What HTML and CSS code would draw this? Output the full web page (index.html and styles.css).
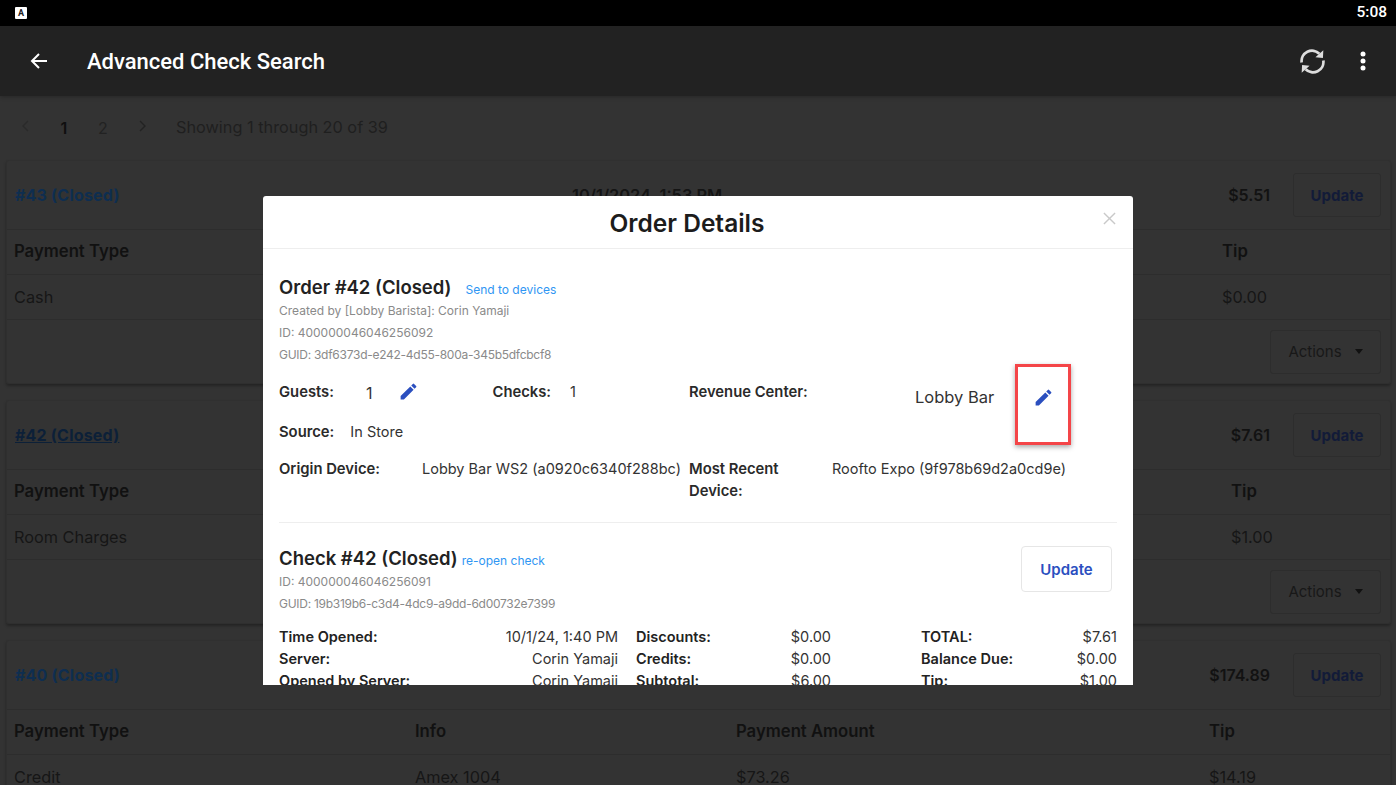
FILE: index.html
```html
<!DOCTYPE html>
<html lang="en">
<head>
<meta charset="utf-8">
<title>Advanced Check Search</title>
<link rel="stylesheet" href="styles.css">
</head>
<body>
<div class="status-bar">
  <span class="status-app">A</span>
  <span class="status-time">5:08</span>
</div>
<header class="app-bar">
  <svg class="back-icon" viewBox="0 0 24 24"><path d="M20 12H5M12 5l-7 7 7 7"/></svg>
  <h1 class="app-title">Advanced Check Search</h1>
  <svg class="sync-icon" viewBox="0 0 24 24"><path class="sync-arc" d="M1.6 13A10 10 0 0 1 18.6 4.6M22.4 11A10 10 0 0 1 5.4 19.4"/><path class="sync-head" d="M22.4 1.2 22 8.6 14.8 8ZM1.6 22.8 2 15.4 9.2 16Z"/></svg>
  <svg class="more-icon" viewBox="0 0 6 22"><circle cx="3" cy="4" r="2.5"/><circle cx="3" cy="11" r="2.5"/><circle cx="3" cy="18" r="2.5"/></svg>
</header>
<main class="page">
  <nav class="pager">
    <svg class="chev chev-off" viewBox="0 0 10 14"><path d="M8 2 3 7l5 5"/></svg>
    <span class="page-num page-on">1</span>
    <span class="page-num">2</span>
    <svg class="chev" viewBox="0 0 10 14"><path d="M2 2l5 5-5 5"/></svg>
    <span class="pager-text">Showing 1 through 20 of 39</span>
  </nav>

  <section class="card">
    <div class="card-head">
      <a class="card-link">#43 (Closed)</a>
      <span class="card-date">10/1/2024, 1:53 PM</span>
      <span class="card-amt">$5.51</span>
      <button class="btn-update">Update</button>
    </div>
    <div class="row row-head tip-a"><span>Payment Type</span><span>Info</span><span>Payment Amount</span><span>Tip</span></div>
    <div class="row tip-a"><span>Cash</span><span></span><span>$5.51</span><span>$0.00</span></div>
    <div class="card-foot"><button class="btn-actions">Actions<i class="caret"></i></button></div>
  </section>

  <section class="card">
    <div class="card-head">
      <a class="card-link card-link-u">#42 (Closed)</a>
      <span class="card-date">10/1/2024, 1:40 PM</span>
      <span class="card-amt">$7.61</span>
      <button class="btn-update">Update</button>
    </div>
    <div class="row row-head tip-b"><span>Payment Type</span><span>Info</span><span>Payment Amount</span><span>Tip</span></div>
    <div class="row tip-b"><span>Room Charges</span><span></span><span>$7.61</span><span>$1.00</span></div>
    <div class="card-foot"><button class="btn-actions">Actions<i class="caret"></i></button></div>
  </section>

  <section class="card">
    <div class="card-head">
      <a class="card-link">#40 (Closed)</a>
      <span class="card-date">10/1/2024, 1:21 PM</span>
      <span class="card-amt">$174.89</span>
      <button class="btn-update">Update</button>
    </div>
    <div class="row row-head tip-c"><span>Payment Type</span><span>Info</span><span>Payment Amount</span><span>Tip</span></div>
    <div class="row tip-c"><span>Credit</span><span>Amex 1004</span><span>$73.26</span><span>$14.19</span></div>
  </section>
</main>

<div class="modal">
  <div class="modal-head">
    <h2 class="modal-title">Order Details</h2>
    <svg class="close-icon" viewBox="0 0 14 14"><path d="M1 1l12 12M13 1 1 13"/></svg>
  </div>
  <div class="modal-body">
    <div class="title-line">
      <h3 class="sec-title">Order #42 (Closed)</h3>
      <a class="sec-link link-order">Send to devices</a>
    </div>
    <p class="meta meta-first">Created by [Lobby Barista]: Corin Yamaji</p>
    <p class="meta">ID: 400000046046256092</p>
    <p class="meta meta-guid">GUID: 3df6373d-e242-4d55-800a-345b5dfcbcf8</p>

    <div class="facts">
      <div class="fact-row fact-row-1">
        <b class="label">Guests:</b>
        <span class="value value-guests">1</span>
        <svg class="edit-icon edit-guests" viewBox="0 0 24 24"><path d="M3 17.25V21h3.75L17.81 9.94l-3.75-3.75L3 17.25zM20.71 7.04a1 1 0 0 0 0-1.41l-2.34-2.34a1 1 0 0 0-1.41 0l-1.83 1.83 3.75 3.75 1.83-1.83z"/></svg>
        <b class="label label-checks">Checks:</b>
        <span class="value value-checks">1</span>
        <b class="label label-rc">Revenue Center:</b>
        <span class="value value-rc">Lobby Bar</span>
        <svg class="edit-icon edit-rc" viewBox="0 0 24 24"><path d="M3 17.25V21h3.75L17.81 9.94l-3.75-3.75L3 17.25zM20.71 7.04a1 1 0 0 0 0-1.41l-2.34-2.34a1 1 0 0 0-1.41 0l-1.83 1.83 3.75 3.75 1.83-1.83z"/></svg>
      </div>
      <div class="fact-row fact-row-2">
        <b class="label">Source:</b>
        <span class="value value-source">In Store</span>
      </div>
      <div class="fact-row fact-row-3">
        <b class="label label-origin">Origin Device:</b>
        <span class="value value-origin">Lobby Bar WS2 (a0920c6340f288bc)</span>
        <b class="label label-recent">Most Recent Device:</b>
        <span class="value">Roofto Expo (9f978b69d2a0cd9e)</span>
      </div>
    </div>

    <hr class="divider">

    <div class="check-head">
      <div class="check-info">
        <div class="title-line">
          <h3 class="sec-title">Check #42 (Closed)</h3>
          <a class="sec-link link-check">re-open check</a>
        </div>
        <p class="meta meta-first">ID: 400000046046256091</p>
        <p class="meta meta-guid">GUID: 19b319b6-c3d4-4dc9-a9dd-6d00732e7399</p>
      </div>
      <button class="btn-modal">Update</button>
    </div>

    <div class="stats">
      <b>Time Opened:</b><span>10/1/24, 1:40 PM</span><b>Discounts:</b><span>$0.00</span><b>TOTAL:</b><span>$7.61</span>
      <b>Server:</b><span>Corin Yamaji</span><b>Credits:</b><span>$0.00</span><b>Balance Due:</b><span>$0.00</span>
      <b>Opened by Server:</b><span>Corin Yamaji</span><b>Subtotal:</b><span>$6.00</span><b>Tip:</b><span>$1.00</span>
    </div>
  </div>
  <div class="callout"></div>
</div>
</body>
</html>
```
FILE: styles.css
```css
* { box-sizing: border-box; }
html, body { margin: 0; height: 785px; overflow: hidden; }
body { background: #333; font-family: Inter, "Liberation Sans", sans-serif; color: #161616; }
h1, h2, h3, p { margin: 0; }
button { font-family: inherit; background: none; }

.status-bar { height: 26px; background: #000; display: flex; align-items: center; justify-content: space-between; padding: 0 9px 0 15px; }
.status-app { width: 12px; height: 12px; background: #fff; border-radius: 1px; color: #222; font: 700 9px/12px Roboto, sans-serif; text-align: center; }
.status-time { color: #fff; font: 500 15.5px/1 Roboto, sans-serif; }

.app-bar { height: 70px; background: #222; display: flex; align-items: center; padding: 0 30px 0 27px; box-shadow: 0 1px 4px rgba(0,0,0,.25); position: relative; }
.back-icon { width: 24px; height: 24px; fill: none; stroke: #fff; stroke-width: 2; margin-right: 36px; }
.app-title { flex: 1; color: #fff; font: 500 22px/1 Roboto, sans-serif; padding-top: 1px; }
.sync-icon { width: 25px; height: 25px; margin-right: 35px; }
.sync-arc { fill: none; stroke: #ddd; stroke-width: 2.6; }
.sync-head { fill: #ddd; }
.more-icon { width: 6px; height: 22px; fill: #fff; }

.page { padding: 0 5px 0 6px; }
.pager { height: 64px; padding-bottom: 2px; display: flex; align-items: center; font-size: 16px; color: #1e1e1e; }
.chev { width: 10px; height: 14px; fill: none; stroke: #222; stroke-width: 1.4; margin-top: -2px; }
.chev-off { stroke: #2a2a2a; margin-left: 14px; }
.page-num { width: 16px; text-align: center; margin: 2px 0 0 0; color: #222; }
.chev-off + .page-num { margin-left: 26px; }
.page-num + .page-num { margin-left: 23px; }
.page-on { font-weight: 600; color: #0f0f0f; }
.page-num + .chev { margin-left: 27px; }
.pager-text { margin-left: 28px; color: #1f1f1f; font-size: 16.3px; }

.card { height: 224px; margin-bottom: 16px; border: 1px solid #2f2f2f; border-top-color: #303030; box-shadow: 0 2px 3px rgba(0,0,0,.3); border-radius: 3px; overflow: hidden; }
.card:last-child { height: 185px; margin-bottom: 0; }
.card-head { height: 69px; display: flex; align-items: center; padding: 0 9px 0 8px; border-bottom: 1px solid #2d2d2d; position: relative; }
.card-link { font-weight: 700; font-size: 16px; color: #0e2e50; letter-spacing: .2px; }
.card-link-u { color: #0c2038; text-decoration: underline; }
.card-date { position: absolute; left: 565px; font-weight: 600; font-size: 16.4px; color: #141414; }
.card-amt { margin-left: auto; font-weight: 600; font-size: 16px; color: #121212; margin-right: 23px; }
.btn-update { width: 88px; height: 44px; border: 1px solid #2d2d2d; border-radius: 3px; color: #121b38; font-weight: 700; font-size: 15px; padding: 0; }
.row { display: grid; height: 45px; align-items: center; padding: 0 8px 0 7px; border-bottom: 1px solid #2d2d2d; font-size: 16.3px; color: #161616; }
.row-head { font-weight: 600; font-size: 16.7px; color: #111; padding-bottom: 2px; }
.tip-a { grid-template-columns: 401px 321px 486px 1fr; }
.tip-b { grid-template-columns: 401px 321px 495px 1fr; }
.tip-c { grid-template-columns: 401px 321px 473px 1fr; }
.card-foot { height: 63px; display: flex; justify-content: flex-end; align-items: center; padding-right: 9px; }
.btn-actions { width: 111px; height: 44px; border: 1px solid #2d2d2d; border-radius: 3px; color: #181818; font-size: 15px; padding: 0; display: flex; align-items: center; justify-content: center; gap: 13px; }
.caret { border: 4.5px solid transparent; border-top: 5px solid #111; border-bottom: 0; }

.modal { position: absolute; left: 263px; top: 196px; width: 870px; height: 489px; background: #fff; border-radius: 3px 3px 0 0; overflow: hidden; }
.modal-head { height: 53px; padding: 2px 22px 0 0; border-bottom: 1px solid #eee; display: flex; align-items: center; justify-content: center; position: relative; }
.modal-title { font-size: 24.5px; font-weight: 600; color: #1c1c1c; }
.close-icon { position: absolute; right: 17px; top: 16px; width: 13px; height: 13px; fill: none; stroke: #c9c9c9; stroke-width: 1.5; }
.modal-body { padding: 26px 16px 0; }
.title-line { display: flex; align-items: baseline; }
.sec-title { font-size: 18.5px; font-weight: 600; color: #222; line-height: 24px; }
.sec-link { font-size: 12px; color: #2f96f3; }
.link-order { margin-left: 14px; }
.link-check { margin-left: 4px; }
.meta { font-size: 12px; line-height: 22px; color: #8a8a8a; }
.meta-first { margin-top: 1px; }
.meta-guid { letter-spacing: -.27px; }

.facts { margin-top: 15px; font-size: 14.5px; }
.fact-row { display: flex; color: #333; }
.fact-row-1 { height: 40px; align-items: flex-start; }
.fact-row-2 { height: 37px; }
.fact-row-3 { height: 64px; }
.label { font-weight: 600; font-size: 14.8px; color: #2a2a2a; line-height: 22px; }
.value { line-height: 22px; }
.value-guests { margin-left: 32px; font-size: 16px; line-height: 24px; }
.edit-guests { margin-left: 26px; }
.label-checks { margin-left: 73px; }
.value-checks { margin-left: 19px; }
.label-rc { margin-left: 113px; width: 226px; }
.value-rc { font-size: 16.5px; line-height: 32px; }
.edit-rc { margin: 6px 0 0 39px; }
.edit-icon { width: 21px; height: 21px; fill: #2b4fbf; flex: none; }
.value-source { margin-left: 16px; }
.label-origin { width: 143px; }
.value-origin { width: 267px; white-space: nowrap; }
.label-recent { width: 143px; }
.divider { border: 0; border-top: 1px solid #eee; margin: 0; }

.check-head { display: flex; justify-content: space-between; padding: 23px 5px 0 0; }
.btn-modal { width: 91px; height: 46px; margin-top: 0; border: 1px solid #e6e6e6; border-radius: 4px; color: #2b4fbf; font-size: 15px; font-weight: 600; padding: 0; }

.stats { display: grid; grid-template-columns: 193px 146px 124px 89px 200px 86px; margin-top: 11px; font-size: 14.5px; line-height: 22px; color: #333; }
.stats b { font-weight: 600; color: #222; white-space: nowrap; }
.stats span { text-align: right; }
.stats b:nth-of-type(3n+2) { padding-left: 18px; }
.stats b:nth-of-type(3n) { padding-left: 90px; }

.callout { position: absolute; left: 752px; top: 168px; width: 56px; height: 81px; border: 3px solid #f44548; box-shadow: 0 2px 5px rgba(0,0,0,.35); }
```
